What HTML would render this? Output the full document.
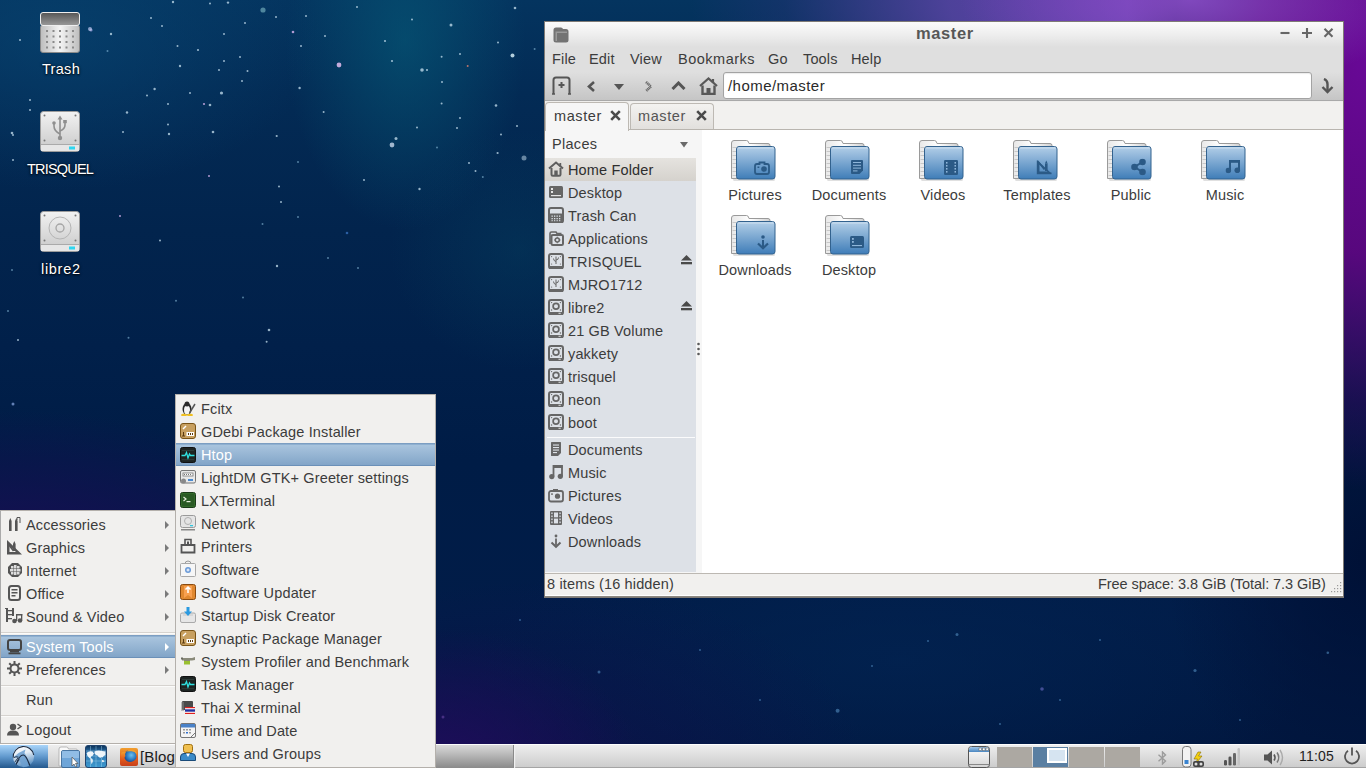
<!DOCTYPE html>
<html><head><meta charset="utf-8">
<style>
*{margin:0;padding:0;box-sizing:border-box}
html,body{width:1366px;height:768px;overflow:hidden}
body{position:relative;font-family:"Liberation Sans",sans-serif;font-size:14.5px;color:#3c3c3c;background:#07295a;}
svg{display:block}
.a{position:absolute}
.t{position:absolute;white-space:nowrap;line-height:17px;font-size:14.5px;letter-spacing:0.15px}
#wall{position:absolute;left:0;top:0;width:1366px;height:768px;
background:
 radial-gradient(ellipse 230px 90px at 1190px 0px, rgba(138,80,200,0.85), rgba(138,80,200,0) 100%),
 radial-gradient(ellipse 240px 430px at 1366px 60px, rgba(104,8,150,1) 0%, rgba(92,6,128,0.95) 45%, rgba(40,10,90,0.6) 80%, rgba(30,10,80,0) 100%),
 radial-gradient(ellipse 470px 180px at 1160px 0px, rgba(110,60,180,1) 0%, rgba(90,68,164,0.85) 45%, rgba(40,52,122,0.4) 80%, rgba(40,52,122,0) 100%),
 radial-gradient(ellipse 200px 260px at 1366px 560px, rgba(0,14,50,0.8), rgba(0,14,50,0) 100%),
 radial-gradient(ellipse 360px 230px at 20px 640px, rgba(24,12,84,1) 0%, rgba(22,14,82,0.85) 50%, rgba(22,14,82,0) 100%),
 radial-gradient(ellipse 200px 140px at 440px 768px, rgba(32,12,92,0.95), rgba(32,12,92,0) 100%),
 radial-gradient(ellipse 330px 190px at 540px 768px, rgba(18,15,80,0.6), rgba(18,15,80,0) 100%),
 radial-gradient(ellipse 420px 160px at 900px 660px, rgba(2,36,82,0.7), rgba(2,36,82,0) 100%),
 radial-gradient(ellipse 120px 190px at 405px 40px, rgba(6,90,120,0.62), rgba(6,90,120,0) 100%),
 radial-gradient(ellipse 130px 120px at 520px 250px, rgba(6,70,100,0.35), rgba(6,70,100,0) 100%),
 radial-gradient(ellipse 260px 150px at 60px 40px, rgba(8,70,115,0.6), rgba(8,70,115,0) 100%),
 linear-gradient(180deg,#04345f 0%,#032b55 12%,#02244d 30%,#01204a 45%,#001c46 60%,#011c48 80%,#01173f 100%);
}
.dl{position:absolute;color:#fff;white-space:nowrap;font-size:14.5px;line-height:17px;text-shadow:0 1px 2px rgba(0,0,0,.9),0 0 3px rgba(0,0,0,.6)}
/* window */
#win{position:absolute;left:544px;top:21px;width:800px;height:577px;background:#efeeec;border:1px solid #7f7b76;}
#title{position:absolute;left:0;top:0;width:798px;height:25px;background:linear-gradient(#fbfbfb 0%,#eeeeee 50%,#dfdfdf 100%);}
#menubar{position:absolute;left:0;top:25px;width:798px;height:25px;background:#dfdfdf}
#toolbar{position:absolute;left:0;top:50px;width:798px;height:29px;background:linear-gradient(#dfdfdf,#c5c5c5);border-bottom:1px solid #a9a9a9}
#addr{position:absolute;left:178px;top:50px;width:589px;height:27px;background:#fff;border:1px solid #a3a3a3;border-radius:3px;box-shadow:inset 0 1px 1px rgba(0,0,0,.08)}
#tabs{position:absolute;left:0;top:80px;width:798px;height:29px;background:#f2f1ef;}
#tabline{position:absolute;left:83px;top:107px;width:715px;height:1px;background:#b9b5af}
.tab{position:absolute;border:1px solid #bdb9b3;border-bottom:none;border-radius:4px 4px 0 0}
#side{position:absolute;left:0;top:108px;width:158px;height:443px;background:#f6f6f6}
#sidelist{position:absolute;left:0;top:28px;width:151px;height:414px;background:#dde1e7}
.sr .t{left:23px}
#main{position:absolute;left:157px;top:108px;width:641px;height:443px;background:#fff}
#status{position:absolute;left:0;top:551px;width:798px;height:22px;background:#f1f0ee;border-top:1px solid #bcb8b2}
#wbot{position:absolute;left:0;top:573px;width:798px;height:2px;background:#fff;border-bottom:1px solid #8c8881}
.fl{position:absolute;text-align:center;white-space:nowrap;font-size:14.5px;line-height:17px;color:#3c3c3c;letter-spacing:0.15px}
/* menus */
#menu{position:absolute;left:0;top:510px;width:176px;height:234px;background:#f1f0ee;border:1px solid #b4b0ab;border-left-color:#aaa}
#sub{position:absolute;left:175px;top:394px;width:261px;height:374px;background:#f1f0ee;border:1px solid #b4b0ab}
.mi{position:absolute;left:0;height:23px;width:100%}
.mi .t{top:4px}
.hl{background:linear-gradient(#abc6df,#82a5c8);box-shadow:inset 0 1px 0 #8fb0d0;border-top:1px solid #7c9ec2;border-bottom:1px solid #6b90b8}
.hl .t{color:#fff;top:3px}
.sep{position:absolute;left:0;right:0;height:2px;border-top:1px solid #d6d3cf;border-bottom:1px solid #fbfbfa}
.arr{position:absolute;right:6px;top:8px;width:0;height:0;border-left:4px solid #7a7a7a;border-top:4px solid transparent;border-bottom:4px solid transparent}
/* taskbar */
#task{position:absolute;left:0;top:744px;width:1366px;height:24px;background:linear-gradient(#eeeeee,#cbcbcb);border-top:1px solid #fdfdfd;box-shadow:inset 0 -1px 0 #a4a4a4}
</style></head><body>
<svg width="0" height="0" style="position:absolute">
<defs>
 <linearGradient id="fgB" x1="0" y1="0" x2="0" y2="1"><stop offset="0" stop-color="#b3cfe8"/><stop offset="1" stop-color="#3f7db8"/></linearGradient>
 <linearGradient id="fgW" x1="0" y1="0" x2="1" y2="0"><stop offset="0" stop-color="#e8e8e8"/><stop offset=".5" stop-color="#ffffff"/><stop offset="1" stop-color="#d0d0d0"/></linearGradient>
 <symbol id="folder" viewBox="0 0 46 44">
   <rect x="3" y="40" width="42" height="3" rx="1.5" fill="#000" opacity=".12"/>
   <path d="M1.5 40.5 V5 Q1.5 2.5 4 2.5 H16.5 Q18.5 2.5 19 5.5 H38 Q40 5.5 40 7.5 V40.5 Z" fill="url(#fgW)" stroke="#9a9a9a" stroke-width="1"/>
   <g fill="#c8c8c8"><rect x="2.5" y="9" width="3.5" height="1"/><rect x="2.5" y="13" width="3.5" height="1"/><rect x="2.5" y="17" width="3.5" height="1"/><rect x="2.5" y="21" width="3.5" height="1"/><rect x="2.5" y="25" width="3.5" height="1"/><rect x="2.5" y="29" width="3.5" height="1"/><rect x="2.5" y="33" width="3.5" height="1"/><rect x="2.5" y="37" width="3.5" height="1"/></g>
   <rect x="6.5" y="8.5" width="38.5" height="32.5" rx="2.5" fill="url(#fgB)" stroke="#33628e" stroke-width="1"/>
   <rect x="7.5" y="9.5" width="36.5" height="1" fill="#fff" opacity=".4"/>
 </symbol>
 <symbol id="e-cam" viewBox="0 0 16 14"><path d="M1 5 Q1 3 3 3 H5.5 V1.5 H10.5 V3 H13 Q15 3 15 5 V11 Q15 13 13 13 H3 Q1 13 1 11Z" fill="none" stroke="#2b5a86" stroke-width="1.8"/><circle cx="10" cy="8" r="2.8" fill="#2b5a86"/><rect x="3.5" y="5.5" width="1.8" height="1.5" fill="#2b5a86"/></symbol>
 <symbol id="e-doc" viewBox="0 0 12 14"><path d="M0 1 Q0 0 1 0 H11 Q12 0 12 1 V10.5 L8.5 14 H1 Q0 14 0 13Z" fill="#2b5a86"/><g fill="#8fb6da"><rect x="2" y="2" width="8" height="1"/><rect x="2" y="4.8" width="8" height="1"/><rect x="2" y="7.6" width="8" height="1"/><rect x="2" y="10.4" width="4.5" height="1"/></g></symbol>
 <symbol id="e-vid" viewBox="0 0 14 15"><rect x="0" y="0" width="14" height="15" rx="1.2" fill="#2b5a86"/><g fill="#8fb6da"><rect x="2" y="2" width="1.5" height="1.6"/><rect x="2" y="5" width="1.5" height="1.6"/><rect x="2" y="8" width="1.5" height="1.6"/><rect x="2" y="11" width="1.5" height="1.6"/><rect x="10.5" y="2" width="1.5" height="1.6"/><rect x="10.5" y="5" width="1.5" height="1.6"/><rect x="10.5" y="8" width="1.5" height="1.6"/><rect x="10.5" y="11" width="1.5" height="1.6"/></g></symbol>
 <symbol id="e-tpl" viewBox="0 0 16 15"><path d="M1 1 V14 H15 Z M3 5 V12 H11Z" fill="#2b5a86" fill-rule="evenodd"/><path d="M1 1 L1 14 L15 14" fill="none" stroke="#2b5a86" stroke-width="1.8"/><path d="M1.5 2 L8 10" stroke="#2b5a86" stroke-width="1.8"/><rect x="8.5" y="4" width="2.6" height="7.5" fill="#2b5a86"/><path d="M8.5 4 L9.8 1 L11.1 4Z" fill="#2b5a86"/></symbol>
 <symbol id="e-share" viewBox="0 0 15 17"><circle cx="11.5" cy="3.5" r="3.3" fill="#2b5a86"/><circle cx="3.5" cy="8.5" r="3.3" fill="#2b5a86"/><circle cx="11.5" cy="13.5" r="3.3" fill="#2b5a86"/><path d="M11.5 3.5 L3.5 8.5 L11.5 13.5" fill="none" stroke="#2b5a86" stroke-width="2"/></symbol>
 <symbol id="e-music" viewBox="0 0 15 14"><path d="M4.5 11 V1.5 H13.5 V10.5" fill="none" stroke="#2b5a86" stroke-width="2"/><circle cx="2.8" cy="11" r="2.8" fill="#2b5a86"/><circle cx="11.8" cy="10.8" r="2.8" fill="#2b5a86"/><rect x="4" y="0.5" width="10" height="2.8" fill="#2b5a86"/></symbol>
 <symbol id="e-dl" viewBox="0 0 12 15"><circle cx="6" cy="2" r="1.8" fill="#2b5a86"/><path d="M6 5 V12" stroke="#2b5a86" stroke-width="2"/><path d="M1 8.5 L6 13.3 L11 8.5" fill="none" stroke="#2b5a86" stroke-width="2.2"/></symbol>
 <symbol id="e-desk" viewBox="0 0 14 12"><rect x="0" y="0" width="14" height="12" rx="1.5" fill="#2b5a86"/><rect x="2" y="2" width="1.8" height="1.8" fill="#8fb6da"/><rect x="2" y="5" width="1.8" height="1.8" fill="#8fb6da"/><rect x="2" y="9" width="10" height="1.1" fill="#8fb6da"/></symbol>

 <symbol id="i-home" viewBox="0 0 16 16"><path d="M1 7.5 L8 1.5 L15 7.5" fill="none" stroke="#5e5e5e" stroke-width="2" stroke-linejoin="miter"/><path d="M12.3 2 V5.5" stroke="#5e5e5e" stroke-width="1.8"/><path d="M3.5 7 V13.5 Q3.5 14.8 4.8 14.8 H11.2 Q12.5 14.8 12.5 13.5 V7" fill="none" stroke="#5e5e5e" stroke-width="2"/><rect x="6.3" y="9.5" width="3.4" height="5" fill="#5e5e5e"/></symbol>
 <symbol id="i-desk" viewBox="0 0 16 16"><rect x="1" y="2" width="14" height="12" rx="1.5" fill="#666"/><rect x="3" y="4" width="2" height="2" fill="#e6e6e6"/><rect x="3" y="7" width="2" height="2" fill="#e6e6e6"/><rect x="3" y="11" width="10" height="1.2" fill="#e6e6e6"/></symbol>
 <symbol id="i-trash" viewBox="0 0 16 16"><rect x="1" y="1" width="14" height="14.5" rx="2" fill="none" stroke="#666" stroke-width="2"/><rect x="1" y="6.5" width="14" height="9" rx="1.5" fill="#666"/><g fill="#dde1e7"><rect x="3.5" y="8.5" width="1.3" height="1.3"/><rect x="6" y="8.5" width="1.3" height="1.3"/><rect x="8.5" y="8.5" width="1.3" height="1.3"/><rect x="11" y="8.5" width="1.3" height="1.3"/><rect x="3.5" y="11" width="1.3" height="1.3"/><rect x="6" y="11" width="1.3" height="1.3"/><rect x="8.5" y="11" width="1.3" height="1.3"/><rect x="11" y="11" width="1.3" height="1.3"/><rect x="3.5" y="13.2" width="1.3" height="1"/><rect x="6" y="13.2" width="1.3" height="1"/><rect x="8.5" y="13.2" width="1.3" height="1"/><rect x="11" y="13.2" width="1.3" height="1"/></g></symbol>
 <symbol id="i-apps" viewBox="0 0 16 16"><path d="M2 14 V3.5 Q2 2 3.5 2 H8 L9 3.5 H13.5" fill="none" stroke="#666" stroke-width="1.6"/><rect x="3.5" y="5" width="11.5" height="10" rx="1.3" fill="none" stroke="#666" stroke-width="2"/><circle cx="9.3" cy="10" r="2" fill="none" stroke="#666" stroke-width="1.5"/><g stroke="#666" stroke-width="1.2"><path d="M9.3 6.8 V7.8 M9.3 12.2 V13.2 M6.1 10 H7.1 M11.5 10 H12.5"/></g></symbol>
 <symbol id="i-usb" viewBox="0 0 16 16"><rect x="1" y="1" width="14" height="14.5" rx="2.2" fill="none" stroke="#666" stroke-width="2"/><rect x="1" y="13" width="14" height="2.5" fill="#666"/><g fill="#666"><circle cx="3.6" cy="3.6" r=".6"/><circle cx="12.4" cy="3.6" r=".6"/><circle cx="3.6" cy="11" r=".6"/><circle cx="12.4" cy="11" r=".6"/></g><path d="M8 3.5 V11 M8 8.5 Q5.5 8 5.5 5.5 M8 7 Q10.5 7 10.5 4.5" fill="none" stroke="#666" stroke-width="1"/></symbol>
 <symbol id="i-hdd" viewBox="0 0 16 16"><rect x="1" y="1" width="14" height="14.5" rx="2.2" fill="none" stroke="#666" stroke-width="2"/><rect x="1" y="13" width="14" height="2.5" fill="#666"/><rect x="10.5" y="13.8" width="2.2" height="0.9" fill="#eee"/><g fill="#666"><circle cx="3.6" cy="3.6" r=".7"/><circle cx="12.4" cy="3.6" r=".7"/><circle cx="3.6" cy="11" r=".7"/><circle cx="12.4" cy="11" r=".7"/></g><circle cx="8" cy="7.3" r="2.9" fill="none" stroke="#666" stroke-width="1.7"/></symbol>
 <symbol id="i-doc" viewBox="0 0 16 16"><path d="M3 1.5 Q3 1 3.5 1 H12.5 Q13 1 13 1.5 V12 L10 15 H3.5 Q3 15 3 14.5Z" fill="#666"/><g fill="#dde1e7"><rect x="5" y="3.5" width="6" height="1.1"/><rect x="5" y="6" width="6" height="1.1"/><rect x="5" y="8.5" width="6" height="1.1"/><rect x="5" y="11" width="4" height="1.1"/></g></symbol>
 <symbol id="i-music" viewBox="0 0 16 16"><path d="M5.5 12.5 V2 H14 V12" fill="none" stroke="#666" stroke-width="1.8"/><circle cx="3.8" cy="12.6" r="2.6" fill="#666"/><circle cx="12.3" cy="12.3" r="2.6" fill="#666"/><rect x="5" y="1.5" width="9.5" height="2.5" fill="#666"/></symbol>
 <symbol id="i-pic" viewBox="0 0 16 16"><rect x="1" y="4" width="14" height="10.5" rx="2" fill="none" stroke="#666" stroke-width="1.8"/><rect x="5" y="2" width="5" height="2.5" fill="#666"/><circle cx="9.5" cy="9.2" r="2.6" fill="#666"/><rect x="3.2" y="6.3" width="1.6" height="1.6" fill="#666"/></symbol>
 <symbol id="i-vid" viewBox="0 0 16 16"><rect x="2" y="1" width="12" height="14" rx="1" fill="#666"/><g fill="#dde1e7"><rect x="3.3" y="2.5" width="1.3" height="1.6"/><rect x="3.3" y="5.5" width="1.3" height="1.6"/><rect x="3.3" y="8.5" width="1.3" height="1.6"/><rect x="3.3" y="11.5" width="1.3" height="1.6"/><rect x="11.4" y="2.5" width="1.3" height="1.6"/><rect x="11.4" y="5.5" width="1.3" height="1.6"/><rect x="11.4" y="8.5" width="1.3" height="1.6"/><rect x="11.4" y="11.5" width="1.3" height="1.6"/><rect x="6" y="2.5" width="4" height="4.8"/><rect x="6" y="8.6" width="4" height="4.8"/></g></symbol>
 <symbol id="i-dl" viewBox="0 0 16 16"><circle cx="8" cy="3" r="1.4" fill="#666"/><path d="M8 5.5 V12" stroke="#666" stroke-width="1.8"/><path d="M3.5 9.5 L8 13.8 L12.5 9.5" fill="none" stroke="#666" stroke-width="2"/></symbol>
 <symbol id="i-eject" viewBox="0 0 11 10"><path d="M5.5 0 L11 5.5 H0Z" fill="#4a4a4a"/><rect x="0" y="7" width="11" height="2.3" fill="#4a4a4a"/></symbol>
 <linearGradient id="drv" x1="0" y1="0" x2="0" y2="1"><stop offset="0" stop-color="#f2f2f2"/><stop offset="1" stop-color="#c8c8c8"/></linearGradient>
</defs>
</svg>
<div id="wall"></div>
<svg class="a" style="left:0;top:0" width="1366" height="768"><circle cx="263" cy="10" r="2.6" fill="rgba(140,200,210,0.55)"/><circle cx="339" cy="65" r="2.4" fill="rgba(230,190,240,0.85)"/><circle cx="293" cy="32" r="1.3" fill="rgba(220,180,240,0.8)"/><circle cx="173" cy="2" r="1.2" fill="rgba(200,225,240,0.75)"/><circle cx="91" cy="30" r="1.6" fill="rgba(170,170,230,0.7)"/><circle cx="221.5" cy="93" r="1.6" fill="rgba(200,225,240,0.75)"/><circle cx="180" cy="66" r="1.2" fill="rgba(200,225,240,0.75)"/><circle cx="210" cy="105" r="1.3" fill="rgba(200,225,240,0.75)"/><circle cx="204" cy="104" r="1.1" fill="rgba(220,180,240,0.8)"/><circle cx="213" cy="132" r="1.3" fill="rgba(200,225,240,0.75)"/><circle cx="169" cy="134" r="1.2" fill="rgba(200,225,240,0.75)"/><circle cx="154.6" cy="89" r="1.2" fill="rgba(200,225,240,0.75)"/><circle cx="111" cy="34" r="1.2" fill="rgba(200,225,240,0.75)"/><circle cx="151" cy="18" r="1" fill="rgba(200,225,240,0.75)"/><circle cx="162" cy="26" r="1" fill="rgba(200,225,240,0.75)"/><circle cx="177.5" cy="46" r="1" fill="rgba(200,225,240,0.75)"/><circle cx="198" cy="50" r="1.1" fill="rgba(200,225,240,0.75)"/><circle cx="224" cy="34" r="1" fill="rgba(200,225,240,0.75)"/><circle cx="245" cy="23" r="1" fill="rgba(200,225,240,0.75)"/><circle cx="276" cy="17" r="1" fill="rgba(200,225,240,0.75)"/><circle cx="306" cy="16" r="1" fill="rgba(200,225,240,0.75)"/><circle cx="325" cy="36" r="1" fill="rgba(200,225,240,0.75)"/><circle cx="301" cy="46" r="1" fill="rgba(200,225,240,0.75)"/><circle cx="299.6" cy="88" r="1.2" fill="rgba(200,225,240,0.75)"/><circle cx="276.7" cy="136" r="1.1" fill="rgba(200,225,240,0.75)"/><circle cx="127" cy="112.5" r="1.2" fill="rgba(200,225,240,0.75)"/><circle cx="168" cy="124.5" r="1" fill="rgba(200,225,240,0.75)"/><circle cx="123" cy="132" r="1" fill="rgba(200,225,240,0.75)"/><circle cx="190" cy="93" r="1" fill="rgba(200,225,240,0.75)"/><circle cx="168" cy="104" r="1" fill="rgba(200,225,240,0.75)"/><circle cx="242" cy="81" r="1" fill="rgba(200,225,240,0.75)"/><circle cx="247.5" cy="71" r="1" fill="rgba(200,225,240,0.75)"/><circle cx="240" cy="57" r="1" fill="rgba(200,225,240,0.75)"/><circle cx="219" cy="70" r="1" fill="rgba(200,225,240,0.75)"/><circle cx="224" cy="61" r="1" fill="rgba(200,225,240,0.75)"/><circle cx="147" cy="95.6" r="1" fill="rgba(200,225,240,0.75)"/><circle cx="210" cy="3.6" r="1" fill="rgba(200,225,240,0.75)"/><circle cx="228" cy="2.6" r="1.2" fill="rgba(200,225,240,0.75)"/><circle cx="357" cy="7" r="1" fill="rgba(200,225,240,0.75)"/><circle cx="323.6" cy="112" r="1" fill="rgba(200,225,240,0.75)"/><circle cx="298" cy="162" r="1" fill="rgba(150,200,230,0.55)"/><circle cx="209" cy="176" r="1" fill="rgba(220,180,240,0.8)"/><circle cx="364" cy="180" r="1" fill="rgba(200,225,240,0.75)"/><circle cx="279" cy="186.5" r="1" fill="rgba(200,225,240,0.75)"/><circle cx="107.5" cy="51" r="1" fill="rgba(150,200,230,0.55)"/><circle cx="451" cy="25" r="1.5" fill="rgba(200,225,240,0.75)"/><circle cx="515" cy="8" r="1.3" fill="rgba(200,225,240,0.75)"/><circle cx="512.5" cy="55.5" r="2" fill="rgba(210,235,245,0.85)"/><circle cx="422" cy="70" r="1.8" fill="rgba(200,225,240,0.75)"/><circle cx="427" cy="70" r="1.1" fill="rgba(200,225,240,0.75)"/><circle cx="392" cy="145" r="2.4" fill="rgba(200,215,235,0.8)"/><circle cx="396" cy="138.5" r="1.5" fill="rgba(200,225,240,0.75)"/><circle cx="524" cy="158" r="2.5" fill="rgba(170,195,215,0.6)"/><circle cx="496" cy="105.5" r="1.3" fill="rgba(200,225,240,0.75)"/><circle cx="467.7" cy="66" r="1" fill="rgba(230,130,110,0.8)"/><circle cx="460" cy="54" r="1" fill="rgba(200,225,240,0.75)"/><circle cx="498" cy="42.5" r="1" fill="rgba(200,225,240,0.75)"/><circle cx="534.6" cy="49" r="1" fill="rgba(150,200,230,0.55)"/><circle cx="385" cy="41" r="1.1" fill="rgba(200,225,240,0.75)"/><circle cx="392" cy="61" r="1.1" fill="rgba(200,225,240,0.75)"/><circle cx="412" cy="19.5" r="1" fill="rgba(200,225,240,0.75)"/><circle cx="441.6" cy="56.8" r="1" fill="rgba(200,225,240,0.75)"/><circle cx="442" cy="82" r="1" fill="rgba(200,225,240,0.75)"/><circle cx="441.6" cy="103.6" r="1" fill="rgba(200,225,240,0.75)"/><circle cx="457" cy="128" r="1" fill="rgba(200,225,240,0.75)"/><circle cx="460" cy="118" r="1" fill="rgba(200,225,240,0.75)"/><circle cx="419.5" cy="189" r="1.2" fill="rgba(200,225,240,0.75)"/><circle cx="497.6" cy="153" r="1.1" fill="rgba(200,225,240,0.75)"/><circle cx="469" cy="163" r="1" fill="rgba(200,225,240,0.75)"/><circle cx="475.5" cy="171" r="1" fill="rgba(200,225,240,0.75)"/><circle cx="482.8" cy="177" r="1" fill="rgba(150,200,230,0.55)"/><circle cx="501" cy="134.6" r="1" fill="rgba(200,225,240,0.75)"/><circle cx="517" cy="126" r="1" fill="rgba(200,225,240,0.75)"/><circle cx="437" cy="147.6" r="1" fill="rgba(150,200,230,0.55)"/><circle cx="417" cy="127.6" r="1" fill="rgba(200,225,240,0.75)"/><circle cx="281" cy="202" r="1" fill="rgba(200,225,240,0.75)"/><circle cx="262.5" cy="224" r="1" fill="rgba(150,200,230,0.55)"/><circle cx="347" cy="233" r="1.3" fill="rgba(60,120,200,0.7)"/><circle cx="277" cy="266" r="1.2" fill="rgba(200,225,240,0.75)"/><circle cx="358" cy="268" r="1" fill="rgba(150,200,230,0.55)"/><circle cx="243" cy="297.5" r="1" fill="rgba(150,200,230,0.55)"/><circle cx="269" cy="330" r="1.3" fill="rgba(200,225,240,0.75)"/><circle cx="266.6" cy="341.8" r="1" fill="rgba(200,225,240,0.75)"/><circle cx="176" cy="300.7" r="1" fill="rgba(150,200,230,0.55)"/><circle cx="160" cy="240.6" r="1" fill="rgba(200,225,240,0.75)"/><circle cx="8" cy="311" r="1" fill="rgba(150,200,230,0.55)"/><circle cx="120" cy="216" r="1" fill="rgba(220,180,240,0.8)"/><circle cx="328" cy="258" r="1" fill="rgba(150,200,230,0.55)"/><circle cx="298" cy="217" r="1" fill="rgba(150,200,230,0.55)"/><circle cx="128.5" cy="337.7" r="1" fill="rgba(150,200,230,0.55)"/><circle cx="12" cy="133" r="1.3" fill="rgba(200,225,240,0.75)"/><circle cx="13" cy="135" r="1" fill="rgba(200,225,240,0.75)"/><circle cx="90" cy="29" r="2" fill="rgba(190,200,240,0.7)"/><circle cx="20" cy="40" r="1" fill="rgba(200,225,240,0.75)"/><circle cx="30" cy="100" r="1" fill="rgba(200,225,240,0.75)"/><circle cx="13" cy="160" r="1" fill="rgba(200,225,240,0.75)"/><circle cx="12" cy="270" r="1" fill="rgba(150,200,230,0.55)"/><circle cx="18" cy="340" r="1" fill="rgba(200,225,240,0.75)"/><circle cx="13" cy="404" r="1.5" fill="rgba(140,170,230,0.7)"/><circle cx="30" cy="110" r="1" fill="rgba(200,225,240,0.75)"/><circle cx="837.6" cy="710.7" r="2" fill="rgba(90,150,200,0.55)"/><circle cx="957" cy="634.4" r="1.5" fill="rgba(90,150,200,0.55)"/><circle cx="1042" cy="689" r="1.8" fill="rgba(110,110,200,0.6)"/><circle cx="1195" cy="670.5" r="1.6" fill="rgba(90,150,200,0.55)"/><circle cx="1327.8" cy="652.8" r="1.3" fill="rgba(90,150,200,0.55)"/><circle cx="599" cy="672" r="1.5" fill="rgba(90,150,200,0.55)"/><circle cx="872" cy="666" r="1" fill="rgba(90,150,200,0.55)"/><circle cx="928" cy="641" r="1" fill="rgba(90,150,200,0.55)"/><circle cx="1060" cy="700" r="1" fill="rgba(90,150,200,0.55)"/><circle cx="1100" cy="640" r="1" fill="rgba(90,150,200,0.55)"/><circle cx="1240" cy="720" r="1" fill="rgba(90,150,200,0.55)"/><circle cx="700" cy="650" r="1" fill="rgba(90,150,200,0.55)"/><circle cx="520" cy="620" r="1" fill="rgba(90,150,200,0.55)"/><circle cx="1000" cy="724" r="1" fill="rgba(90,150,200,0.55)"/><circle cx="760" cy="700" r="1" fill="rgba(90,150,200,0.55)"/><circle cx="443" cy="717" r="1.5" fill="rgba(120,80,180,0.5)"/></svg>

<!-- desktop icons -->
<svg class="a" style="left:40px;top:12px" width="40" height="41" viewBox="0 0 40 41">
 <defs><linearGradient id="trb" x1="0" y1="0" x2="1" y2="0"><stop offset="0" stop-color="#bdbdbd"/><stop offset=".5" stop-color="#f4f4f4"/><stop offset="1" stop-color="#bdbdbd"/></linearGradient>
 <linearGradient id="trl" x1="0" y1="0" x2="0" y2="1"><stop offset="0" stop-color="#555"/><stop offset="1" stop-color="#9a9a9a"/></linearGradient></defs>
 <rect x="0.5" y="13" width="39" height="27.5" rx="2.5" fill="url(#trb)" stroke="#8a8a8a"/>
 <rect x="0.5" y="0.5" width="39" height="13" rx="2.5" fill="url(#trl)" stroke="#eee"/>
 <g fill="#8a8a8a">
  <rect x="6" y="18" width="2" height="2"/><rect x="12.5" y="18" width="2" height="2"/><rect x="19" y="18" width="2" height="2"/><rect x="25.5" y="18" width="2" height="2"/><rect x="32" y="18" width="2" height="2"/>
  <rect x="6" y="23.5" width="2" height="2"/><rect x="12.5" y="23.5" width="2" height="2"/><rect x="19" y="23.5" width="2" height="2"/><rect x="25.5" y="23.5" width="2" height="2"/><rect x="32" y="23.5" width="2" height="2"/>
  <rect x="6" y="29" width="2" height="2"/><rect x="12.5" y="29" width="2" height="2"/><rect x="19" y="29" width="2" height="2"/><rect x="25.5" y="29" width="2" height="2"/><rect x="32" y="29" width="2" height="2"/>
  <rect x="6" y="34.5" width="2" height="2"/><rect x="12.5" y="34.5" width="2" height="2"/><rect x="19" y="34.5" width="2" height="2"/><rect x="25.5" y="34.5" width="2" height="2"/><rect x="32" y="34.5" width="2" height="2"/>
 </g>
</svg>
<div class="dl" style="left:42px;top:61px;letter-spacing:0.3px">Trash</div>

<svg class="a" style="left:40px;top:111px" width="40" height="41" viewBox="0 0 40 41">
 <rect x="0.5" y="0.5" width="39" height="40" rx="3" fill="url(#drv)" stroke="#9c9c9c"/>
 <rect x="1" y="34" width="38" height="6" fill="#e6e6e6"/><line x1="1" y1="33.5" x2="39" y2="33.5" stroke="#aaa"/>
 <rect x="29" y="35.5" width="6" height="3" fill="#2fd6f0"/>
 <g fill="#777"><circle cx="4.5" cy="4.5" r="1"/><circle cx="35.5" cy="4.5" r="1"/><circle cx="4.5" cy="29.5" r="1"/><circle cx="35.5" cy="29.5" r="1"/></g>
 <g fill="none" stroke="#8f8f8f" stroke-width="1.6"><path d="M20 7 V27"/><path d="M20 23 Q14 20 14 15 V12"/><path d="M20 20 Q25 18 25 14 V11"/></g>
 <g fill="#8f8f8f"><path d="M17.5 8.5 L20 4.5 L22.5 8.5Z"/><circle cx="20" cy="27" r="2.2"/><circle cx="14" cy="12" r="1.8"/><rect x="23.2" y="9" width="3.6" height="3.2"/></g>
</svg>
<div class="dl" style="left:27px;top:161px;letter-spacing:-0.8px">TRISQUEL</div>

<svg class="a" style="left:40px;top:211px" width="40" height="41" viewBox="0 0 40 41">
 <rect x="0.5" y="0.5" width="39" height="40" rx="3" fill="url(#drv)" stroke="#9c9c9c"/>
 <rect x="1" y="34" width="38" height="6" fill="#e6e6e6"/><line x1="1" y1="33.5" x2="39" y2="33.5" stroke="#aaa"/>
 <rect x="29" y="35.5" width="6" height="3" fill="#2fd6f0"/>
 <g fill="#777"><circle cx="4.5" cy="4.5" r="1"/><circle cx="35.5" cy="4.5" r="1"/><circle cx="4.5" cy="29.5" r="1"/><circle cx="35.5" cy="29.5" r="1"/></g>
 <circle cx="20" cy="17" r="11" fill="none" stroke="#b5b5b5" stroke-width="1"/>
 <circle cx="20" cy="17" r="4" fill="none" stroke="#a5a5a5" stroke-width="1.3"/>
</svg>
<div class="dl" style="left:41px;top:261px;letter-spacing:0.7px">libre2</div>

<!-- WINDOW -->
<div id="win">
  <div id="title">
    <svg class="a" style="left:8px;top:5px" width="16" height="16" viewBox="0 0 16 16"><path d="M0.5 3 Q0.5 0.5 3 0.5 H8 Q9.5 0.5 10 2 H13 Q15.5 2 15.5 4.5 V13 Q15.5 15.5 13 15.5 H3 Q0.5 15.5 0.5 13Z" fill="#737373"/><path d="M2.5 4.5 H14 V6 H4 V14 H2.5Z" fill="#9a9a9a"/></svg>
    <div class="t" style="left:371px;top:3px;font-weight:bold;font-size:16.5px;color:#575757;letter-spacing:0.6px">master</div>
    <svg class="a" style="left:735px;top:5px" width="60" height="13" viewBox="0 0 60 13"><g stroke="#666" stroke-width="2.1" fill="none"><path d="M0.5 6 H9.5"/><path d="M22 6 H32 M27 1 V11"/><path d="M44.5 1.8 L52.5 9.8 M52.5 1.8 L44.5 9.8"/></g></svg>
  </div>
  <div id="menubar">
    <div class="t" style="left:7px;top:4px">File</div>
    <div class="t" style="left:44px;top:4px">Edit</div>
    <div class="t" style="left:85px;top:4px">View</div>
    <div class="t" style="left:133px;top:4px;letter-spacing:0.5px">Bookmarks</div>
    <div class="t" style="left:223px;top:4px">Go</div>
    <div class="t" style="left:258px;top:4px">Tools</div>
    <div class="t" style="left:306px;top:4px">Help</div>
  </div>
  <div id="toolbar">
    <svg class="a" style="left:7px;top:4px" width="20" height="19" viewBox="0 0 20 19"><path d="M1.5 18 V4 Q1.5 1.5 4 1.5 H15 Q17.5 1.5 17.5 4 V18" fill="none" stroke="#555" stroke-width="2"/><path d="M0 18 H3 M16 18 H19" stroke="#555" stroke-width="1.5"/><path d="M9.5 6 V12 M6.5 9 H12.5" stroke="#555" stroke-width="2"/></svg>
    <svg class="a" style="left:41px;top:9px" width="10" height="11" viewBox="0 0 10 11"><path d="M8 1 L3 5.5 L8 10" fill="none" stroke="#555" stroke-width="2.6"/></svg>
    <svg class="a" style="left:69px;top:12px" width="10" height="6" viewBox="0 0 10 6"><path d="M0 0 H10 L5 6Z" fill="#555"/></svg>
    <svg class="a" style="left:99px;top:9px" width="10" height="11" viewBox="0 0 10 11"><path d="M2 1 L7 5.5 L2 10" fill="none" stroke="#6a6a6a" stroke-width="2.6" stroke-dasharray="1.2 0.5"/></svg>
    <svg class="a" style="left:126px;top:9px" width="15" height="9" viewBox="0 0 15 9"><path d="M1.5 8 L7.5 2 L13.5 8" fill="none" stroke="#555" stroke-width="3"/></svg>
    <svg class="a" style="left:154px;top:5px" width="19" height="18" viewBox="0 0 19 18"><path d="M1 9 L9.5 1.5 L18 9" fill="none" stroke="#585858" stroke-width="2.2"/><path d="M14 2 V6" stroke="#585858" stroke-width="2.2"/><path d="M3.5 8.5 V17 H15.5 V8.5" fill="none" stroke="#585858" stroke-width="2.4"/><rect x="7.5" y="11" width="4" height="6" fill="#585858"/></svg>
    <svg class="a" style="left:776px;top:6px" width="13" height="16" viewBox="0 0 13 16"><path d="M3 1 Q6.5 2.5 6.5 6 V13" fill="none" stroke="#555" stroke-width="2.4"/><path d="M1.5 9 L6.5 14 L11.5 9" fill="none" stroke="#555" stroke-width="2.4"/></svg>
  </div>
  <div id="addr"><div class="t" style="left:4px;top:4px;color:#2a2a2a;font-size:15px;letter-spacing:0.45px">/home/master</div></div>
  <div id="tabs">
    <div class="tab" style="left:0;top:0px;width:84px;height:29px;background:#f6f6f6;z-index:2"><div class="t" style="left:8px;top:5px;letter-spacing:0.6px">master</div>
      <svg class="a" style="left:64px;top:7px" width="11" height="11" viewBox="0 0 11 11"><path d="M1.2 1.2 L9.8 9.8 M9.8 1.2 L1.2 9.8" stroke="#4a4a4a" stroke-width="2.6"/></svg></div>
    <div class="tab" style="left:85px;top:1px;width:84px;height:26px;background:linear-gradient(#f3f2f0,#e2e0dd)"><div class="t" style="left:7px;top:4px;letter-spacing:0.6px;color:#555">master</div>
      <svg class="a" style="left:65px;top:6px" width="11" height="11" viewBox="0 0 11 11"><path d="M1.2 1.2 L9.8 9.8 M9.8 1.2 L1.2 9.8" stroke="#4a4a4a" stroke-width="2.6"/></svg></div>
  </div>
  <div id="tabline"></div>
  <div id="side">
    <div class="t" style="left:7px;top:6px;letter-spacing:0.3px">Places</div>
    <svg class="a" style="left:135px;top:12px" width="8" height="6" viewBox="0 0 8 6"><path d="M0 0 H8 L4 5.5Z" fill="#6a6a6a"/></svg>
    <div id="sidelist">
<div class="a" style="left:0;top:0;width:151px;height:23px;background:linear-gradient(#e5e3df,#d5d2cd)"></div>
<svg class="a" style="left:3px;top:3px" width="16" height="16"><use href="#i-home"/></svg><div class="t" style="left:23px;top:4px;color:#2e2e2e">Home Folder</div>
<svg class="a" style="left:3px;top:26px" width="16" height="16"><use href="#i-desk"/></svg><div class="t" style="left:23px;top:27px;color:#3c3c3c">Desktop</div>
<svg class="a" style="left:3px;top:49px" width="16" height="16"><use href="#i-trash"/></svg><div class="t" style="left:23px;top:50px;color:#3c3c3c">Trash Can</div>
<svg class="a" style="left:3px;top:72px" width="16" height="16"><use href="#i-apps"/></svg><div class="t" style="left:23px;top:73px;color:#3c3c3c">Applications</div>
<svg class="a" style="left:3px;top:95px" width="16" height="16"><use href="#i-usb"/></svg><div class="t" style="left:23px;top:96px;color:#3c3c3c">TRISQUEL</div>
<svg class="a" style="left:3px;top:118px" width="16" height="16"><use href="#i-usb"/></svg><div class="t" style="left:23px;top:119px;color:#3c3c3c">MJRO1712</div>
<svg class="a" style="left:3px;top:141px" width="16" height="16"><use href="#i-hdd"/></svg><div class="t" style="left:23px;top:142px;color:#3c3c3c">libre2</div>
<svg class="a" style="left:3px;top:164px" width="16" height="16"><use href="#i-hdd"/></svg><div class="t" style="left:23px;top:165px;color:#3c3c3c">21 GB Volume</div>
<svg class="a" style="left:3px;top:187px" width="16" height="16"><use href="#i-hdd"/></svg><div class="t" style="left:23px;top:188px;color:#3c3c3c">yakkety</div>
<svg class="a" style="left:3px;top:210px" width="16" height="16"><use href="#i-hdd"/></svg><div class="t" style="left:23px;top:211px;color:#3c3c3c">trisquel</div>
<svg class="a" style="left:3px;top:233px" width="16" height="16"><use href="#i-hdd"/></svg><div class="t" style="left:23px;top:234px;color:#3c3c3c">neon</div>
<svg class="a" style="left:3px;top:256px" width="16" height="16"><use href="#i-hdd"/></svg><div class="t" style="left:23px;top:257px;color:#3c3c3c">boot</div>
<svg class="a" style="left:136px;top:97px" width="11" height="10"><use href="#i-eject"/></svg>
<svg class="a" style="left:136px;top:143px" width="11" height="10"><use href="#i-eject"/></svg>
<div class="a" style="left:2px;top:279px;width:148px;height:1px;background:#fbfbfc"></div>
<svg class="a" style="left:3px;top:283px" width="16" height="16"><use href="#i-doc"/></svg><div class="t" style="left:23px;top:284px">Documents</div>
<svg class="a" style="left:3px;top:306px" width="16" height="16"><use href="#i-music"/></svg><div class="t" style="left:23px;top:307px">Music</div>
<svg class="a" style="left:3px;top:329px" width="16" height="16"><use href="#i-pic"/></svg><div class="t" style="left:23px;top:330px">Pictures</div>
<svg class="a" style="left:3px;top:352px" width="16" height="16"><use href="#i-vid"/></svg><div class="t" style="left:23px;top:353px">Videos</div>
<svg class="a" style="left:3px;top:375px" width="16" height="16"><use href="#i-dl"/></svg><div class="t" style="left:23px;top:376px">Downloads</div>
</div>
  </div>
  <div id="main">
<svg class="a" style="left:28px;top:8px" width="46" height="44"><use href="#folder"/><svg x="24" y="23" width="16" height="14"><use href="#e-cam"/></svg></svg>
<div class="fl" style="left:-7px;width:120px;top:57px">Pictures</div>
<svg class="a" style="left:122px;top:8px" width="46" height="44"><use href="#folder"/><svg x="27" y="22" width="12" height="14"><use href="#e-doc"/></svg></svg>
<div class="fl" style="left:87px;width:120px;top:57px">Documents</div>
<svg class="a" style="left:216px;top:8px" width="46" height="44"><use href="#folder"/><svg x="26" y="22" width="14" height="15"><use href="#e-vid"/></svg></svg>
<div class="fl" style="left:181px;width:120px;top:57px">Videos</div>
<svg class="a" style="left:310px;top:8px" width="46" height="44"><use href="#folder"/><svg x="24.5" y="21.5" width="16" height="15"><use href="#e-tpl"/></svg></svg>
<div class="fl" style="left:275px;width:120px;top:57px">Templates</div>
<svg class="a" style="left:404px;top:8px" width="46" height="44"><use href="#folder"/><svg x="25" y="20.5" width="15" height="17"><use href="#e-share"/></svg></svg>
<div class="fl" style="left:369px;width:120px;top:57px">Public</div>
<svg class="a" style="left:498px;top:8px" width="46" height="44"><use href="#folder"/><svg x="25.5" y="21.5" width="15" height="14"><use href="#e-music"/></svg></svg>
<div class="fl" style="left:463px;width:120px;top:57px">Music</div>
<svg class="a" style="left:28px;top:83px" width="46" height="44"><use href="#folder"/><svg x="27" y="22" width="12" height="15"><use href="#e-dl"/></svg></svg>
<div class="fl" style="left:-7px;width:120px;top:132px">Downloads</div>
<svg class="a" style="left:122px;top:83px" width="46" height="44"><use href="#folder"/><svg x="26" y="23" width="14" height="12"><use href="#e-desk"/></svg></svg>
<div class="fl" style="left:87px;width:120px;top:132px">Desktop</div>
</div>
  <div id="status">
    <div class="t" style="left:2px;top:2px">8 items (16 hidden)</div>
    <div class="t" style="left:553px;top:2px;letter-spacing:-0.05px">Free space: 3.8 GiB (Total: 7.3 GiB)</div>
  </div>
  <svg class="a" style="left:151px;top:319px" width="6" height="16" viewBox="0 0 6 16"><g fill="#5a5a5a"><circle cx="2.5" cy="3" r="1.3"/><circle cx="2.5" cy="8" r="1.3"/><circle cx="2.5" cy="13" r="1.3"/></g></svg>
  <svg class="a" style="left:785px;top:559px" width="13" height="13" viewBox="0 0 13 13"><g fill="#9a9a9a"><rect x="10" y="1" width="1.2" height="1.2"/><rect x="7" y="4" width="1.2" height="1.2"/><rect x="10" y="4" width="1.2" height="1.2"/><rect x="4" y="7" width="1.2" height="1.2"/><rect x="7" y="7" width="1.2" height="1.2"/><rect x="10" y="7" width="1.2" height="1.2"/><rect x="1" y="10" width="1.2" height="1.2"/><rect x="4" y="10" width="1.2" height="1.2"/><rect x="7" y="10" width="1.2" height="1.2"/><rect x="10" y="10" width="1.2" height="1.2"/></g></svg>
  <div id="wbot"></div>
</div>

<div id="task">
 <div class="a" style="left:0;top:0;width:48px;height:24px;background:linear-gradient(#a9d5fa,#5f97cc 50%,#1e5287)"></div>
 <svg class="a" style="left:12px;top:0px" width="23" height="23" viewBox="0 0 23 23">
  <defs><linearGradient id="lx" x1="0" y1="0" x2="0.3" y2="1"><stop offset="0" stop-color="#ffffff"/><stop offset=".45" stop-color="#e6eef6"/><stop offset="1" stop-color="#5f93c4"/></linearGradient></defs>
  <circle cx="11.5" cy="11.6" r="10.6" fill="url(#lx)"/>
  <path d="M1.2 12.5 A10.4 10.4 0 0 1 21.8 10" fill="none" stroke="#1c2c44" stroke-width="1.1"/>
  <path d="M1.5 12.2 Q7 7 13.5 4.5 L12.5 8 Q15.5 12 17.5 21 Q14 22 11 22 Q8 17 6 13 Q4 12 1.5 12.2Z" fill="#6b9fd0" opacity=".85"/>
  <path d="M4.2 19.5 Q7.5 9.5 11.5 10 Q14.5 10.8 17.7 20.5" fill="none" stroke="#1c2c44" stroke-width="1.2"/>
  <path d="M1.5 12.8 Q4 11 6.5 12.2 M2.8 17.2 L5.8 13 M4.3 18.8 L7.3 14.5" fill="none" stroke="#1c2c44" stroke-width=".9"/>
 </svg>
 <svg class="a" style="left:58px;top:1px" width="22" height="22" viewBox="0 0 22 22">
  <path d="M1 20 V3 Q1 1 3 1 H8.5 Q10 1 10.5 3 H18 Q19.5 3 19.5 4.5 V20Z" fill="#fafafa" stroke="#aaa" stroke-width=".8"/>
  <rect x="3.5" y="4.5" width="18" height="17" rx="1.5" fill="#6ea5d8" stroke="#2e5f90" stroke-width=".8"/>
  <rect x="4" y="5" width="17" height="7" fill="#a8cdee" opacity=".6"/>
  <path d="M14 11 V20 L16 18 L17.5 21 L19 20.3 L17.5 17.5 H20Z" fill="#fff" stroke="#555" stroke-width=".7"/>
 </svg>
 <svg class="a" style="left:85px;top:0px" width="22" height="23" viewBox="0 0 22 23">
  <defs><linearGradient id="glb" x1="0" y1="0" x2="0" y2="1"><stop offset="0" stop-color="#0a2f55"/><stop offset=".3" stop-color="#2c6fa8"/><stop offset="1" stop-color="#3c9ad0"/></linearGradient></defs>
  <rect x="0.5" y="0.5" width="21" height="22" rx="2.5" fill="url(#glb)" stroke="#21456f"/>
  <g stroke="#a8dcf5" stroke-width=".7" opacity=".6"><path d="M1 6 H21 M1 11 H21 M1 16 H21 M5.5 1 V22 M11 1 V22 M16.5 1 V22"/></g>
  <path d="M1.5 8 Q4 5.5 7.5 6.5 L9 8.5 Q8 11 6 11.5 L5.5 14 Q3.5 12 2.5 11Z" fill="#eef5fa"/>
  <path d="M9.5 6.5 Q13 5 17 6 L20.5 6.5 V10 Q18.5 10.5 17.5 12.5 Q16 11.5 15.5 13 Q13.5 12 12.5 10.5 Q10.5 10 9.5 8.5Z" fill="#eef5fa"/>
  <path d="M6 13 Q8 13.5 8 16 Q7.5 18 6.5 19 Q5.5 16 5.5 14Z" fill="#dfeaf2"/>
  <path d="M17 15 Q19 14.5 19.5 16.5 Q18 17.5 17 17Z" fill="#dfeaf2"/>
 </svg>
 <div class="a" style="left:300px;top:0;width:214px;height:23px;background:linear-gradient(#d9d9d9,#8a8a8a);border-right:1px solid #8a8a8a;box-shadow:1px 0 1px #f0f0f0"></div>
 <svg class="a" style="left:120px;top:3px" width="18" height="18" viewBox="0 0 18 18">
  <defs><radialGradient id="ffg" cx=".6" cy=".4" r=".6"><stop offset="0" stop-color="#6cc0f0"/><stop offset=".6" stop-color="#2a78c0"/><stop offset="1" stop-color="#1a3f80"/></radialGradient>
  <linearGradient id="ffo" x1="0" y1="0" x2="0" y2="1"><stop offset="0" stop-color="#f0a030"/><stop offset=".5" stop-color="#e8601a"/><stop offset="1" stop-color="#c8401a"/></linearGradient></defs>
  <rect x="0" y="0" width="18" height="18" rx="2" fill="url(#ffo)"/>
  <circle cx="10" cy="8.5" r="6.5" fill="url(#ffg)"/>
  <path d="M1 5 Q3 3 6 4 Q4.5 6 5.5 8 Q4 9.5 5 11 Q7 14.5 11 14 Q14 13.5 16 11 Q15.5 16 10 17 Q4 17 1.5 12 Q0.5 8 1 5Z" fill="url(#ffo)"/>
  <path d="M6 3.5 Q9 1 13 1.8 Q16.5 2.8 17 6 Q14.5 3 11 3.2Z" fill="#f0a030"/>
 </svg>
 <div class="t" style="left:140px;top:3px;font-size:15px;color:#1a1a1a">[Blog</div>
 <svg class="a" style="left:968px;top:1px" width="22" height="22" viewBox="0 0 22 22">
  <rect x="0.5" y="0.5" width="21" height="21" rx="3" fill="url(#wgr)" stroke="#555"/>
  <defs><linearGradient id="wgr" x1="0" y1="0" x2="0" y2="1"><stop offset="0" stop-color="#ffffff"/><stop offset="1" stop-color="#d4d4d4"/></linearGradient>
  <linearGradient id="wgb" x1="0" y1="0" x2="0" y2="1"><stop offset="0" stop-color="#9fc6ea"/><stop offset="1" stop-color="#4a86c0"/></linearGradient></defs>
  <path d="M1 4 Q1 1 4 1 H18 Q21 1 21 4 V6 H1Z" fill="url(#wgb)"/>
  <g fill="#fff" stroke="#555" stroke-width=".5"><rect x="11" y="2" width="2.5" height="2.5"/><rect x="14.5" y="2" width="2.5" height="2.5"/><rect x="18" y="2" width="2.2" height="2.5"/></g>
  <rect x="1" y="18" width="20" height="1" fill="#888"/>
 </svg>
 <div class="a" style="left:997px;top:2px;width:35px;height:20px;background:#aca8a2"></div>
 <div class="a" style="left:1033px;top:2px;width:35px;height:20px;background:#5a7fa2"></div>
 <div class="a" style="left:1047px;top:3px;width:20px;height:15px;background:#d6e4f1;border:2px solid #fff"></div>
 <div class="a" style="left:1069px;top:2px;width:35px;height:20px;background:#aca8a2"></div>
 <div class="a" style="left:1105px;top:2px;width:35px;height:20px;background:#aca8a2"></div>
 <svg class="a" style="left:1157px;top:6px" width="11" height="14" viewBox="0 0 11 14"><path d="M1.5 3.8 L8.5 10 L5.5 13 V1 L8.5 4 L1.5 10.2" fill="none" stroke="#9c9c9c" stroke-width="1.4"/></svg>
 <svg class="a" style="left:1182px;top:1px" width="24" height="22" viewBox="0 0 24 22">
  <rect x="0.5" y="0.5" width="8.5" height="20.5" rx="3" fill="#f2f2f2" stroke="#777"/>
  <rect x="2.5" y="14" width="4" height="4" fill="#3a84d0"/>
  <path d="M16 6 L12 13 H15.5 L13.5 18 L20 10 H16.5 L19 6Z" fill="#f4d010" stroke="#8a7000" stroke-width=".6"/>
  <rect x="11" y="15" width="11" height="6" rx="2" fill="#444"/>
  <circle cx="14" cy="18" r="1.5" fill="#ddd"/><circle cx="19" cy="18" r="1.5" fill="#ddd"/>
 </svg>
 <svg class="a" style="left:1223px;top:2px" width="18" height="19" viewBox="0 0 18 19">
  <rect x="1" y="13" width="3" height="5.5" rx="1.3" fill="#555"/><rect x="5.5" y="9.5" width="3" height="9" rx="1.3" fill="#555"/><rect x="10" y="6" width="3" height="12.5" rx="1.3" fill="#666"/><rect x="14.5" y="1" width="2.5" height="17.5" rx="1.2" fill="#c4c4c4"/>
 </svg>
 <svg class="a" style="left:1263px;top:4px" width="21" height="17" viewBox="0 0 21 17">
  <path d="M1 5.5 H4.5 L9 1.5 V15.5 L4.5 11.5 H1Z" fill="#555"/>
  <path d="M11 5.5 Q13 8.5 11 11.5" fill="none" stroke="#555" stroke-width="1.6"/>
  <path d="M14 3.5 Q17.5 8.5 14 13.5" fill="none" stroke="#777" stroke-width="1.5"/>
  <path d="M17 1 Q22 8.5 17 16" fill="none" stroke="#aaa" stroke-width="1.4"/>
 </svg>
 <div class="t" style="left:1299px;top:3px;font-size:14px;color:#1e1e1e;letter-spacing:0.2px">11:05</div>
 <svg class="a" style="left:1343px;top:2px" width="18" height="18" viewBox="0 0 18 18">
  <path d="M5 3.8 A7 7 0 1 0 13 3.8" fill="none" stroke="#555" stroke-width="1.8"/>
  <path d="M9 0.5 V8.5" stroke="#555" stroke-width="1.8"/>
 </svg>
</div>

<div id="menu">
  <div class="mi" style="top:2px"><svg class="a" style="left:6px;top:3px" width="16" height="16" viewBox="0 0 16 16"><g fill="#555"><rect x="2" y="5" width="2.6" height="10"/><path d="M2 5 L3.3 2 L4.6 5Z"/><rect x="8" y="5" width="2.6" height="10"/><path d="M8 5 L9.3 2 L10.6 5Z"/></g><path d="M10 4 V1.5 H13 V7" fill="none" stroke="#555" stroke-width="1"/></svg><div class="t" style="left:25px">Accessories</div><div class="arr"></div></div>
  <div class="mi" style="top:25px"><svg class="a" style="left:5px;top:3px" width="17" height="17" viewBox="0 0 17 17"><path d="M1 1 V15.5 H16Z M3.5 7 V13 H10Z" fill="#555" fill-rule="evenodd"/><rect x="7" y="5" width="2.6" height="7" fill="#555"/><path d="M7 5 L8.3 2 L9.6 5Z" fill="#555"/><path d="M3 6 L7.5 12" stroke="#555" stroke-width="1.6"/></svg><div class="t" style="left:25px">Graphics</div><div class="arr"></div></div>
  <div class="mi" style="top:48px"><svg class="a" style="left:6px;top:3px" width="16" height="16" viewBox="0 0 16 16"><path d="M5 1 H11 L15 5 V11 L11 15 H5 L1 11 V5Z" fill="#555"/><g fill="#ddd"><rect x="4" y="4" width="2.5" height="2.5"/><rect x="7" y="3" width="2.5" height="3.5"/><rect x="10" y="4" width="2.5" height="2.5"/><rect x="3" y="7" width="3.5" height="2.5"/><rect x="7" y="7" width="2.5" height="2.5"/><rect x="10" y="7" width="3.5" height="2.5"/><rect x="4" y="10" width="2.5" height="2.5"/><rect x="7" y="10" width="2.5" height="3"/><rect x="10" y="10" width="2.5" height="2.5"/></g></svg><div class="t" style="left:25px">Internet</div><div class="arr"></div></div>
  <div class="mi" style="top:71px"><svg class="a" style="left:7px;top:3px" width="13" height="16" viewBox="0 0 13 16"><rect x="1" y="1" width="11" height="14" rx="2.5" fill="none" stroke="#555" stroke-width="2"/><rect x="3.5" y="4" width="6" height="1.5" fill="#555"/><rect x="3.5" y="7" width="6" height="1.5" fill="#555"/><rect x="3.5" y="10" width="4" height="1.5" fill="#555"/></svg><div class="t" style="left:25px">Office</div><div class="arr"></div></div>
  <div class="mi" style="top:94px"><svg class="a" style="left:4px;top:3px" width="18" height="16" viewBox="0 0 18 16"><g fill="#555"><rect x="1" y="0" width="2" height="14"/><rect x="7" y="0" width="2" height="8"/><rect x="3" y="2" width="4" height="1.3"/><rect x="3" y="6" width="4" height="1.3"/><rect x="3" y="10" width="4" height="1.3"/><rect x="0" y="0" width="1" height="1"/><circle cx="9.5" cy="13" r="2.3"/><circle cx="15" cy="12.5" r="2.3"/><rect x="11" y="6" width="1.3" height="7"/><rect x="16" y="6" width="1.3" height="6.5"/><rect x="11" y="6" width="6.3" height="1.5"/></g></svg><div class="t" style="left:25px">Sound &amp; Video</div><div class="arr"></div></div>
  <div class="sep" style="top:121px"></div>
  <div class="mi hl" style="top:124px"><svg class="a" style="left:6px;top:3px" width="15" height="16" viewBox="0 0 15 16"><rect x="1" y="1" width="13" height="10" rx="2" fill="none" stroke="#444" stroke-width="2"/><rect x="3" y="12" width="9" height="1.5" fill="#444"/><rect x="1.5" y="13.5" width="12" height="1.8" fill="#444"/></svg><div class="t" style="left:25px">System Tools</div><div class="arr" style="border-left-color:#fff;top:7px"></div></div>
  <div class="mi" style="top:147px"><svg class="a" style="left:6px;top:3px" width="15" height="15" viewBox="0 0 15 15"><circle cx="7.5" cy="7.5" r="4" fill="none" stroke="#555" stroke-width="2"/><g stroke="#555" stroke-width="2"><path d="M7.5 0 V3 M7.5 12 V15 M0 7.5 H3 M12 7.5 H15 M2.2 2.2 L4.3 4.3 M10.7 10.7 L12.8 12.8 M12.8 2.2 L10.7 4.3 M4.3 10.7 L2.2 12.8"/></g></svg><div class="t" style="left:25px">Preferences</div><div class="arr"></div></div>
  <div class="sep" style="top:174px"></div>
  <div class="mi" style="top:177px"><div class="t" style="left:25px">Run</div></div>
  <div class="sep" style="top:204px"></div>
  <div class="mi" style="top:207px"><svg class="a" style="left:6px;top:5px" width="16" height="13" viewBox="0 0 16 13"><circle cx="6" cy="4" r="3.2" fill="#555"/><path d="M0 12.5 Q0 7.5 6 7.5 Q12 7.5 12 12.5Z" fill="#555"/><path d="M10.5 1 L14 3.5 L10.5 6" fill="none" stroke="#555" stroke-width="1.5"/></svg><div class="t" style="left:25px">Logout</div></div>
</div>

<div id="sub">
  <div class="mi" style="top:2px"><svg class="a" style="left:4px;top:3px" width="16" height="16" viewBox="0 0 16 16"><ellipse cx="7" cy="9" rx="4.5" ry="6" fill="#2a2a2a"/><ellipse cx="7" cy="10" rx="3" ry="4.5" fill="#f4f4f4"/><circle cx="7" cy="4" r="2.5" fill="#2a2a2a"/><ellipse cx="4" cy="15" rx="3" ry="1.3" fill="#f0c020"/><ellipse cx="10" cy="15" rx="3" ry="1.3" fill="#f0c020"/><path d="M9.5 13 L15 4" stroke="#555" stroke-width="1.5"/></svg><div class="t" style="left:25px">Fcitx</div></div>
  <div class="mi" style="top:25px"><svg class="a" style="left:4px;top:3px" width="16" height="16" viewBox="0 0 16 16"><rect x="0.5" y="0.5" width="15" height="15" rx="2.5" fill="#c8a060" stroke="#7a5418"/><path d="M3 6 L6 3" stroke="#fff" stroke-width="1.5"/><rect x="6.5" y="9" width="7.5" height="4" fill="#fff"/><g fill="#5a3a10"><rect x="8" y="10" width="1" height="2"/><rect x="10" y="10" width="1" height="2"/><rect x="12" y="10" width="1" height="2"/></g><path d="M3.5 9 V13 M2 13 H5" stroke="#5a3a10" stroke-width="1"/></svg><div class="t" style="left:25px">GDebi Package Installer</div></div>
  <div class="mi hl" style="top:48px"><svg class="a" style="left:4px;top:3px" width="16" height="16" viewBox="0 0 16 16"><rect x="0.5" y="0.5" width="15" height="15" rx="2" fill="#1d2422" stroke="#101010"/><path d="M1.5 8.5 H5 L6.5 5.5 L8 11 L9.5 7 L10.5 8.5 H14.5" fill="none" stroke="#2fe0e0" stroke-width="1.3"/><rect x="2" y="3" width="12" height=".6" fill="#3a4a48"/><rect x="2" y="12.5" width="12" height=".6" fill="#3a4a48"/></svg><div class="t" style="left:25px">Htop</div></div>
  <div class="mi" style="top:71px"><svg class="a" style="left:4px;top:3px" width="16" height="16" viewBox="0 0 16 16"><rect x="0.5" y="1.5" width="15" height="12.5" rx="1.5" fill="#e8e8e8" stroke="#777"/><rect x="3" y="4" width="10" height="3" fill="#fff" stroke="#777" stroke-width=".8"/><g fill="#777"><rect x="4" y="5" width="1" height="1"/><rect x="6" y="5" width="1" height="1"/><rect x="8" y="5" width="1" height="1"/><rect x="10" y="5" width="1" height="1"/></g><circle cx="3.5" cy="12" r="2.5" fill="#888"/><rect x="8" y="10" width="5" height="2" fill="#4a8ad0"/></svg><div class="t" style="left:25px">LightDM GTK+ Greeter settings</div></div>
  <div class="mi" style="top:94px"><svg class="a" style="left:4px;top:3px" width="16" height="16" viewBox="0 0 16 16"><rect x="0.5" y="0.5" width="15" height="15" rx="2" fill="#3a7a30" stroke="#1a3a18"/><rect x="1.5" y="1.5" width="13" height="13" rx="1" fill="#2a5a24"/><path d="M3.5 5 L6 7 L3.5 9" fill="none" stroke="#e8f0e0" stroke-width="1.2"/><rect x="6.5" y="9" width="4" height="1.2" fill="#e8f0e0"/></svg><div class="t" style="left:25px">LXTerminal</div></div>
  <div class="mi" style="top:117px"><svg class="a" style="left:4px;top:3px" width="16" height="16" viewBox="0 0 16 16"><rect x="0.5" y="0.5" width="15" height="12" rx="2" fill="#e4e4e4" stroke="#9a9a9a"/><circle cx="8" cy="6" r="3.5" fill="none" stroke="#b0b0b0"/><rect x="10" y="10" width="3" height="1.3" fill="#30c8e0"/><rect x="1" y="14" width="14" height="1.5" fill="#888"/></svg><div class="t" style="left:25px">Network</div></div>
  <div class="mi" style="top:140px"><svg class="a" style="left:4px;top:3px" width="16" height="16" viewBox="0 0 16 16"><path d="M5 7 V1.5 H11 V7" fill="none" stroke="#555" stroke-width="1.6"/><path d="M1.5 7 H14.5 V14.5 H1.5Z" fill="none" stroke="#555" stroke-width="1.8"/><rect x="7" y="3.5" width="2" height="3" fill="#555"/></svg><div class="t" style="left:25px">Printers</div></div>
  <div class="mi" style="top:163px"><svg class="a" style="left:4px;top:2px" width="16" height="17" viewBox="0 0 16 17"><path d="M5 4 Q5 1 8 1 Q11 1 11 4" fill="none" stroke="#999" stroke-width="1"/><rect x="0.5" y="3.5" width="15" height="13" rx="1" fill="#f6f6f6" stroke="#a8a8a8"/><circle cx="8" cy="10" r="3" fill="#6a9ad8"/><path d="M8 8.5 V11.5 M6.5 10 H9.5" stroke="#fff" stroke-width="1"/></svg><div class="t" style="left:25px">Software</div></div>
  <div class="mi" style="top:186px"><svg class="a" style="left:4px;top:3px" width="16" height="16" viewBox="0 0 16 16"><rect x="0.5" y="0.5" width="15" height="15" rx="2" fill="#e08830" stroke="#8a4a10"/><path d="M4 2 V14 L8 11 L12 14 V2Z" fill="#f8a050"/><path d="M8 3 V9 M5.5 5.5 L8 3 L10.5 5.5" fill="none" stroke="#fff" stroke-width="1.5"/></svg><div class="t" style="left:25px">Software Updater</div></div>
  <div class="mi" style="top:209px"><svg class="a" style="left:4px;top:3px" width="16" height="16" viewBox="0 0 16 16"><rect x="0.5" y="6" width="15" height="9.5" rx="1.5" fill="#e6e6e6" stroke="#aaa"/><path d="M3 8 H13" stroke="#c8c8c8"/><rect x="6.5" y="0" width="3" height="5" fill="#2a9ae0"/><path d="M4 4.5 L8 9 L12 4.5Z" fill="#2a9ae0"/></svg><div class="t" style="left:25px">Startup Disk Creator</div></div>
  <div class="mi" style="top:232px"><svg class="a" style="left:4px;top:3px" width="16" height="16" viewBox="0 0 16 16"><rect x="0.5" y="0.5" width="15" height="15" rx="2.5" fill="#c8a060" stroke="#7a5418"/><path d="M3 6 L6 3" stroke="#fff" stroke-width="1.5"/><rect x="6.5" y="9" width="7.5" height="4" fill="#fff"/><g fill="#5a3a10"><rect x="8" y="10" width="1" height="2"/><rect x="10" y="10" width="1" height="2"/><rect x="12" y="10" width="1" height="2"/></g><path d="M3.5 9 V13 M2 13 H5" stroke="#5a3a10" stroke-width="1"/></svg><div class="t" style="left:25px">Synaptic Package Manager</div></div>
  <div class="mi" style="top:255px"><svg class="a" style="left:4px;top:3px" width="16" height="16" viewBox="0 0 16 16"><path d="M2 5 H12 L15 4 V7 L12 7.5 H10 V11 H4 V7.5 H2Z" fill="#8a8a7a"/><rect x="4" y="8" width="6" height="3.5" fill="#9ac030"/><rect x="1" y="4.5" width="2" height="2" fill="#6a6a60"/></svg><div class="t" style="left:25px">System Profiler and Benchmark</div></div>
  <div class="mi" style="top:278px"><svg class="a" style="left:4px;top:3px" width="16" height="16" viewBox="0 0 16 16"><rect x="0.5" y="0.5" width="15" height="15" rx="2" fill="#1d2422" stroke="#101010"/><path d="M1.5 8.5 H5 L6.5 5.5 L8 11 L9.5 7 L10.5 8.5 H14.5" fill="none" stroke="#2fe0e0" stroke-width="1.3"/><rect x="2" y="3" width="12" height=".6" fill="#3a4a48"/><rect x="2" y="12.5" width="12" height=".6" fill="#3a4a48"/></svg><div class="t" style="left:25px">Task Manager</div></div>
  <div class="mi" style="top:301px"><svg class="a" style="left:4px;top:3px" width="16" height="16" viewBox="0 0 16 16"><rect x="2" y="2" width="11" height="9" rx="1" fill="#4a4a4a"/><rect x="1" y="3" width="3" height="9" fill="#888" opacity=".5"/><g><rect x="5" y="8" width="10" height="7" fill="#e02020"/><rect x="5" y="9.2" width="10" height="4.6" fill="#fff"/><rect x="5" y="10.3" width="10" height="2.4" fill="#2030a0"/></g></svg><div class="t" style="left:25px">Thai X terminal</div></div>
  <div class="mi" style="top:324px"><svg class="a" style="left:4px;top:3px" width="16" height="16" viewBox="0 0 16 16"><rect x="0.5" y="1.5" width="15" height="14" rx="1.5" fill="#f4f4f4" stroke="#777"/><rect x="1" y="2" width="14" height="3.5" fill="#4a82c8"/><g fill="#999"><rect x="3" y="7" width="2" height="1.5"/><rect x="6" y="7" width="2" height="1.5"/><rect x="9" y="7" width="2" height="1.5"/><rect x="3" y="10" width="2" height="1.5"/><rect x="9" y="10" width="2" height="1.5"/></g><rect x="6" y="10" width="2" height="1.5" fill="#3070d0"/><path d="M11 15 L15 11" stroke="#777"/></svg><div class="t" style="left:25px">Time and Date</div></div>
  <div class="mi" style="top:347px"><svg class="a" style="left:4px;top:2px" width="16" height="17" viewBox="0 0 16 17"><rect x="3.5" y="0.5" width="9" height="8" rx="2" fill="#f0c050" stroke="#a07010"/><path d="M0.5 16.5 V13 Q0.5 9.5 4 9.5 H12 Q15.5 9.5 15.5 13 V16.5Z" fill="#3a8ac8" stroke="#1a4a78"/><path d="M6 9.5 L8 13 L10 9.5" fill="#fff"/></svg><div class="t" style="left:25px">Users and Groups</div></div>
</div>

</body></html>
